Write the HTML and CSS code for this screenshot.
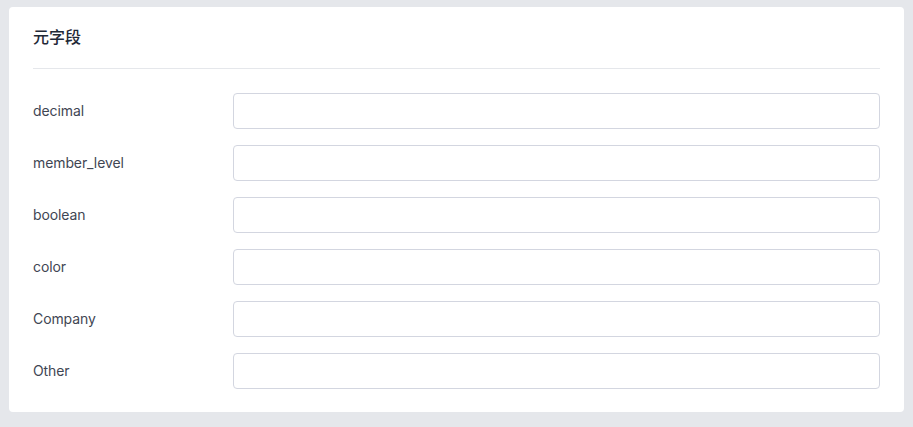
FILE: index.html
```html
<!DOCTYPE html>
<html lang="zh">
<head>
<meta charset="utf-8">
<link rel="stylesheet" href="styles.css">
</head>
<body>
<div class="card">
  <div class="card-header">元字段</div>
  <div class="card-body">
    <div class="row"><label class="label">decimal</label><input class="input" type="text"></div>
    <div class="row"><label class="label">member_level</label><input class="input" type="text"></div>
    <div class="row"><label class="label">boolean</label><input class="input" type="text"></div>
    <div class="row"><label class="label">color</label><input class="input" type="text"></div>
    <div class="row"><label class="label">Company</label><input class="input" type="text"></div>
    <div class="row"><label class="label">Other</label><input class="input" type="text"></div>
  </div>
</div>
</body>
</html>
```
FILE: styles.css
```css
html, body {
  margin: 0;
  background: #e5e7eb;
}
body {
  padding: 7px 9px 9px 9px;
  font-family: Inter, "Noto Sans CJK SC", sans-serif;
}
.card {
  background: #ffffff;
  border-radius: 4px;
  padding: 0 24px 23px 24px;
}
.card-header {
  padding: 18px 0 19px 0;
  font-size: 16px;
  line-height: 24px;
  font-weight: 500;
  color: #1f2937;
  border-bottom: 1px solid #e5e7eb;
}
.card-body {
  padding-top: 24px;
  display: flex;
  flex-direction: column;
  gap: 16px;
}
.row {
  display: flex;
  align-items: center;
}
.label {
  width: 200px;
  flex: none;
  font-size: 14px;
  line-height: 20px;
  padding-bottom: 1px;
  color: #3f4653;
  letter-spacing: -0.1px;
}
.input {
  flex: 1;
  height: 36px;
  box-sizing: border-box;
  border: 1px solid #d3d6e0;
  border-radius: 4px;
  background: #fff;
  margin: 0;
  padding: 0 10px;
  font-family: inherit;
  font-size: 14px;
}
```
